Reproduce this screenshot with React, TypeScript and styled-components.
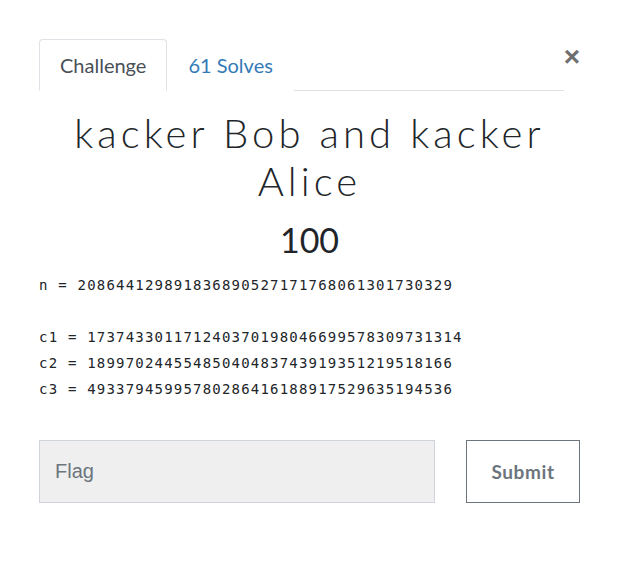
import React from "react";
import styled, { createGlobalStyle } from "styled-components";

const Global = createGlobalStyle`
  html, body { margin: 0; padding: 0; background: #fff; }
  body { font-family: Lato, "Open Sans", sans-serif; color: #212529; }
`;

const Modal = styled.div`
  width: 541px;
  padding: 39px 0 0 39px;
`;

const Header = styled.div`
  display: flex;
  align-items: flex-start;
`;

const TabList = styled.div`
  display: flex;
  width: 525px;
  height: 52px;
  border-bottom: 1px solid #dee2e6;
  box-sizing: border-box;
`;

const Tab = styled.div<{ $active?: boolean }>`
  height: 52px;
  box-sizing: border-box;
  padding: 0 20px;
  display: flex;
  align-items: center;
  font-size: 20px;
  color: ${(p) => (p.$active ? "#495057" : "#337ab7")};
  border: 1px solid ${(p) => (p.$active ? "#dee2e6" : "transparent")};
  border-bottom-color: ${(p) => (p.$active ? "#fff" : "transparent")};
  border-radius: 4px 4px 0 0;
  background: #fff;
  margin-bottom: -1px;
`;

const Close = styled.div`
  margin-left: auto;
  margin-top: 4px;
  font-size: 28px;
  line-height: 1;
  font-weight: 700;
  color: #6f6f6f;
  font-family: "Liberation Sans", sans-serif;
`;

const Title = styled.h1`
  margin: 18px 0 0;
  text-align: center;
  font-family: Lato, sans-serif;
  font-weight: 300;
  font-size: 40px;
  line-height: 48px;
  letter-spacing: 4.1px;
  color: #212529;
`;

const Points = styled.div`
  text-align: center;
  font-size: 34px;
  line-height: 40px;
  margin-top: 15px;
  color: #212529;
`;

const Code = styled.pre`
  margin: 12px 0 0;
  font-family: "DejaVu Sans Mono", monospace;
  font-size: 14px;
  letter-spacing: 1.2px;
  line-height: 26px;
  color: #212529;
`;

const Form = styled.div`
  display: flex;
  gap: 31px;
  margin-top: 38px;
`;

const Input = styled.input`
  width: 396px;
  height: 63px;
  box-sizing: border-box;
  background: #efefef;
  border: 1px solid #ced4da;
  padding: 0 15px;
  font-family: "Liberation Sans", Arial, sans-serif;
  font-size: 20px;
  outline: none;
  &::placeholder { color: #6c757d; }
`;

const Submit = styled.button`
  width: 114px;
  height: 63px;
  box-sizing: border-box;
  background: #fff;
  border: 1px solid #6c757d;
  border-radius: 0;
  font-family: Lato, sans-serif;
  font-weight: 700;
  font-size: 19px;
  letter-spacing: 0.6px;
  color: #6c757d;
`;

const lines = [
  "n = 208644129891836890527171768061301730329",
  "",
  "c1 = 173743301171240370198046699578309731314",
  "c2 = 189970244554850404837439193512195181" + "66",
  "c3 = 493379459957802864161889175296351945" + "36",
];

export default function App() {
  return (
    <>
      <Global />
      <Modal>
        <Header>
          <TabList>
            <Tab $active>Challenge</Tab>
            <Tab>61 Solves</Tab>
          </TabList>
          <Close>×</Close>
        </Header>
        <Title>kacker Bob and kacker Alice</Title>
        <Points>100</Points>
        <Code>{lines.join("\n")}</Code>
        <Form>
          <Input placeholder="Flag" />
          <Submit>Submit</Submit>
        </Form>
      </Modal>
    </>
  );
}
